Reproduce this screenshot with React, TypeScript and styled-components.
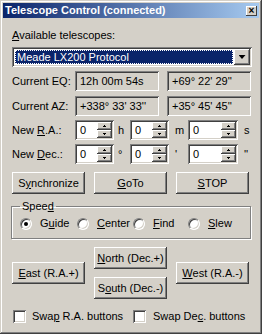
import React from "react";
import styled, { createGlobalStyle } from "styled-components";

const GlobalStyle = createGlobalStyle`
  html, body { margin: 0; padding: 0; background: #d4d0c8; }
  body {
    font-family: "Liberation Sans", Arial, sans-serif;
    font-size: 11px;
    color: #000;
  }
  * { box-sizing: border-box; }
`;

const raised = `
  box-shadow: inset -1px -1px #404040, inset 1px 1px #ffffff,
    inset -2px -2px #808080, inset 2px 2px #d4d0c8;
`;
const sunken = `
  box-shadow: inset 1px 1px #808080, inset -1px -1px #ffffff,
    inset 2px 2px #404040, inset -2px -2px #d4d0c8;
`;

const Window = styled.div`
  width: 262px;
  height: 334px;
  padding: 3px;
  background: #d4d0c8;
  box-shadow: inset -1px -1px #404040, inset 1px 1px #d4d0c8,
    inset -2px -2px #808080, inset 2px 2px #ffffff;
  display: flex;
  flex-direction: column;
`;

const TitleBar = styled.div`
  height: 15px;
  display: flex;
  align-items: center;
  justify-content: space-between;
  padding: 0 2px 0 2px;
  background: linear-gradient(to right, #0a246a, #a6caf0);
`;

const TitleText = styled.span`
  color: #fff;
  font-weight: bold;
  font-size: 11px;
  line-height: 13px;
`;

const CloseButton = styled.div`
  width: 11px;
  height: 10px;
  background: #d4d0c8;
  box-shadow: inset -1px -1px #404040, inset 1px 1px #ffffff;
  display: flex;
  align-items: center;
  justify-content: center;
  font-size: 10px;
  line-height: 10px;
  font-weight: bold;
`;

const Body = styled.div`
  display: flex;
  flex-direction: column;
  padding-left: 8px;
`;

const U = styled.span`
  text-decoration: underline;
  text-underline-offset: 1px;
`;

const Caption = styled.div`
  margin-top: 11px;
  padding-left: 1px;
  line-height: 13px;
`;

const Combo = styled.div`
  margin-top: 5px;
  margin-left: 1px;
  width: 240px;
  height: 20px;
  padding: 2px;
  display: flex;
  background: #fff;
  ${sunken}
`;

const ComboValue = styled.div`
  flex: 1;
  margin: 1px;
  padding-left: 2px;
  line-height: 14px;
  background: #0a246a;
  color: #fff;
  outline: 1px dotted #fff;
  outline-offset: -1px;
`;

const DropButton = styled.div`
  width: 16px;
  height: 16px;
  background: #d4d0c8;
  display: flex;
  align-items: center;
  justify-content: center;
  ${raised}
`;

const DownTriangle = styled.div`
  width: 7px;
  height: 4px;
  background: #000;
  clip-path: polygon(0 0, 100% 0, 50% 100%);
`;

const FieldRow = styled.div<{ $mt: number }>`
  margin-top: ${(p) => p.$mt}px;
  height: 20px;
  display: flex;
  align-items: center;
`;

const RowLabel = styled.span`
  width: 64px;
  padding-left: 1px;
`;

const ReadField = styled.div<{ $w: number }>`
  width: ${(p) => p.$w}px;
  height: 20px;
  padding-left: 5px;
  line-height: 20px;
  background: #d4d0c8;
  ${sunken}
`;

const Gap = styled.div<{ $w: number }>`
  width: ${(p) => p.$w}px;
`;

const SpinBox = styled.div<{ $w: number }>`
  width: ${(p) => p.$w}px;
  height: 20px;
  padding: 2px;
  display: flex;
  background: #fff;
  ${sunken}
`;

const SpinValue = styled.span`
  flex: 1;
  padding-left: 3px;
  line-height: 16px;
`;

const SpinButtons = styled.div`
  width: 15px;
  display: flex;
  flex-direction: column;
`;

const SpinHalf = styled.div`
  height: 8px;
  background: #d4d0c8;
  display: flex;
  align-items: center;
  justify-content: center;
  ${raised}
`;

const Tiny = styled.div<{ $up?: boolean }>`
  width: 1px;
  height: 1px;
  background: #000;
  box-shadow: -1px ${(p) => (p.$up ? 1 : -1)}px #000,
    1px ${(p) => (p.$up ? 1 : -1)}px #000,
    0 ${(p) => (p.$up ? 1 : -1)}px #000;
  margin-top: ${(p) => (p.$up ? -1 : 1)}px;
`;

const Unit = styled.span<{ $w: number; $pl: number }>`
  width: ${(p) => p.$w}px;
  padding-left: ${(p) => p.$pl}px;
`;

const ButtonRow = styled.div`
  margin-top: 8px;
  padding-left: 1px;
  display: flex;
  gap: 9px;
`;

const PushButton = styled.button`
  width: 73px;
  height: 22px;
  padding: 0;
  border: none;
  background: #d4d0c8;
  font: inherit;
  color: #000;
  ${raised}
`;

const GroupBox = styled.fieldset`
  margin: 6px 0 0 0;
  width: 240px;
  padding: 4px 0 8px 8px;
  border: 1px solid #808080;
  box-shadow: inset 1px 1px #ffffff, 1px 1px #ffffff;
  display: flex;
`;

const Legend = styled.legend`
  padding: 0 2px;
  line-height: 13px;
`;

const RadioItem = styled.div<{ $w: number }>`
  width: ${(p) => p.$w}px;
  height: 13px;
  display: flex;
  align-items: center;
`;

const RadioCircle = styled.div<{ $on?: boolean }>`
  flex: none;
  width: 12px;
  height: 12px;
  border-radius: 50%;
  background: #fff;
  border: 1px solid;
  border-color: #808080 #ffffff #ffffff #808080;
  box-shadow: inset 1px 1px #404040, inset -1px -1px #d4d0c8;
  display: flex;
  align-items: center;
  justify-content: center;
  &::after {
    content: "";
    display: ${(p) => (p.$on ? "block" : "none")};
    width: 4px;
    height: 4px;
    border-radius: 50%;
    background: #000;
  }
`;

const ItemText = styled.span<{ $ml: number }>`
  margin-left: ${(p) => p.$ml}px;
  line-height: 13px;
  white-space: nowrap;
`;

const DirPad = styled.div`
  margin-top: 8px;
  padding-left: 1px;
  height: 52px;
  display: grid;
  grid-template-columns: 73px 73px 73px;
  column-gap: 9px;
  align-items: center;
`;

const DirColumn = styled.div`
  display: flex;
  flex-direction: column;
  gap: 8px;
`;

const CheckRow = styled.div`
  margin-top: 11px;
  padding-left: 2px;
  display: flex;
`;

const CheckItem = styled.div<{ $w: number }>`
  width: ${(p) => p.$w}px;
  display: flex;
  align-items: center;
`;

const CheckBox = styled.div`
  width: 13px;
  height: 13px;
  background: #fff;
  ${sunken}
`;

const Spin = ({ w }: { w: number }) => (
  <SpinBox $w={w}>
    <SpinValue>0</SpinValue>
    <SpinButtons>
      <SpinHalf>
        <Tiny $up />
      </SpinHalf>
      <SpinHalf>
        <Tiny />
      </SpinHalf>
    </SpinButtons>
  </SpinBox>
);

const speeds = [
  { pre: "G", u: "u", post: "ide", w: 57, on: true },
  { pre: "", u: "C", post: "enter", w: 56 },
  { pre: "", u: "F", post: "ind", w: 55 },
  { pre: "", u: "S", post: "lew", w: 55 },
];

export default function App() {
  return (
    <>
      <GlobalStyle />
      <Window>
        <TitleBar>
          <TitleText>Telescope Control (connected)</TitleText>
          <CloseButton>×</CloseButton>
        </TitleBar>
        <Body>
          <Caption>
            <U>A</U>vailable telescopes:
          </Caption>
          <Combo>
            <ComboValue>Meade LX200 Protocol</ComboValue>
            <DropButton>
              <DownTriangle />
            </DropButton>
          </Combo>

          <FieldRow $mt={4}>
            <RowLabel>Current EQ:</RowLabel>
            <ReadField $w={84}>12h 00m 54s</ReadField>
            <Gap $w={8} />
            <ReadField $w={84}>+69° 22' 29''</ReadField>
          </FieldRow>
          <FieldRow $mt={5}>
            <RowLabel>Current AZ:</RowLabel>
            <ReadField $w={84}>+338° 33' 33''</ReadField>
            <Gap $w={8} />
            <ReadField $w={84}>+35° 45' 45''</ReadField>
          </FieldRow>

          <FieldRow $mt={4}>
            <RowLabel>
              New <U>R</U>.A.:
            </RowLabel>
            <Spin w={39} />
            <Unit $w={16} $pl={4}>h</Unit>
            <Spin w={39} />
            <Unit $w={19} $pl={6}>m</Unit>
            <Spin w={50} />
            <Unit $w={20} $pl={6}>s</Unit>
          </FieldRow>
          <FieldRow $mt={4}>
            <RowLabel>
              New <U>D</U>ec.:
            </RowLabel>
            <Spin w={39} />
            <Unit $w={16} $pl={4}>°</Unit>
            <Spin w={39} />
            <Unit $w={19} $pl={6}>'</Unit>
            <Spin w={50} />
            <Unit $w={20} $pl={6}>''</Unit>
          </FieldRow>

          <ButtonRow>
            <PushButton>
              S<U>y</U>nchronize
            </PushButton>
            <PushButton>
              <U>G</U>oTo
            </PushButton>
            <PushButton>
              <U>S</U>TOP
            </PushButton>
          </ButtonRow>

          <GroupBox>
            <Legend>
              Spee<U>d</U>
            </Legend>
            {speeds.map((s) => (
              <RadioItem key={s.u} $w={s.w}>
                <RadioCircle $on={s.on} />
                <ItemText $ml={8}>
                  {s.pre}
                  <U>{s.u}</U>
                  {s.post}
                </ItemText>
              </RadioItem>
            ))}
          </GroupBox>

          <DirPad>
            <PushButton>
              <U>E</U>ast (R.A.+)
            </PushButton>
            <DirColumn>
              <PushButton>
                <U>N</U>orth (Dec.+)
              </PushButton>
              <PushButton>
                S<U>o</U>uth (Dec.-)
              </PushButton>
            </DirColumn>
            <PushButton>
              <U>W</U>est (R.A.-)
            </PushButton>
          </DirPad>

          <CheckRow>
            <CheckItem $w={120}>
              <CheckBox />
              <ItemText $ml={6}>
                Swa<U>p</U> R.A. buttons
              </ItemText>
            </CheckItem>
            <CheckItem $w={120}>
              <CheckBox />
              <ItemText $ml={7}>
                Swap De<U>c</U>. buttons
              </ItemText>
            </CheckItem>
          </CheckRow>
        </Body>
      </Window>
    </>
  );
}
